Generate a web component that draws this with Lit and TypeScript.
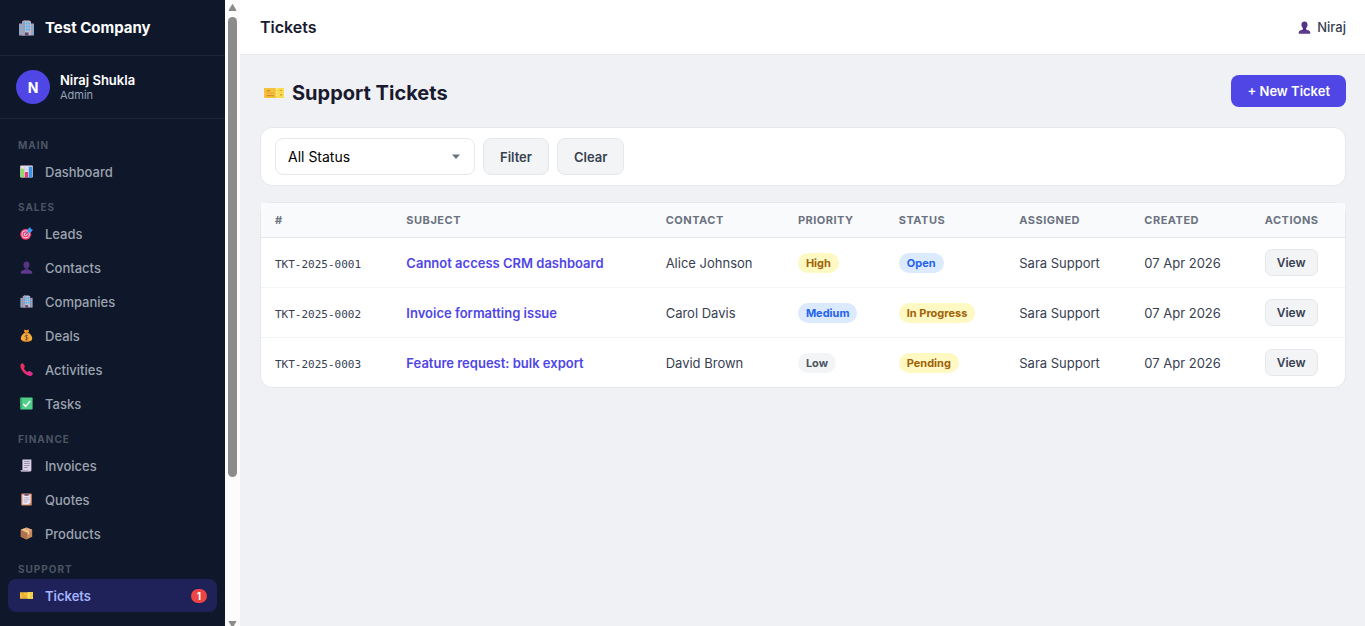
import { LitElement, html, css, svg, type TemplateResult } from "lit";
import { customElement, property } from "lit/decorators.js";
import { classMap } from "lit/directives/class-map.js";

const glyphs: Record<string, TemplateResult> = {
  building: svg`
    <path d="M1 7h6v24H1z" fill="#a79fb5"/><path d="M25 7h6v24h-6z" fill="#a79fb5"/>
    <path d="M7 3l4-2h10l4 2v28H7z" fill="#c3b9cd"/>
    <path d="M7 3l4-2h2v30H7z" fill="#a89db4"/>
    <path d="M10 5h3v4h-3zM15 5h3v4h-3zM20 5h3v4h-3zM10 11h3v4h-3zM15 11h3v4h-3zM20 11h3v4h-3zM10 17h3v4h-3zM15 17h3v4h-3zM20 17h3v4h-3z" fill="#3fb4ee"/>
    <path d="M2 12h3v3H2zM2 18h3v3H2zM2 24h3v3H2zM27 12h3v3h-3zM27 18h3v3h-3zM27 24h3v3h-3z" fill="#57b9e8"/>
    <path d="M13 25h7v6h-7z" fill="#574b70"/>`,
  chart: svg`
    <rect x="0.500" y="1" width="31" height="30" rx="2" fill="#e6dcee"/>
    <path d="M1 11h30M1 21h30M11 1v30M21 1v30" stroke="#c6b9d4" stroke-width="1"/>
    <rect x="2" y="9" width="8" height="22" rx="1" fill="#8ae05e"/>
    <rect x="12" y="17" width="8" height="14" rx="1" fill="#e63a7c"/>
    <rect x="22" y="4" width="8" height="27" rx="1" fill="#3398e8"/>`,
  target: svg`
    <circle cx="14" cy="18" r="13.500" fill="#e9386b"/><circle cx="14" cy="18" r="10" fill="#f5c9db"/>
    <circle cx="14" cy="18" r="7.500" fill="#e5366b"/><circle cx="14" cy="18" r="4.500" fill="#f3d5e2"/><circle cx="14" cy="18" r="2.200" fill="#d92c5e"/>
    <path d="M14 18L25 7" stroke="#2e6fc0" stroke-width="2"/>
    <path d="M18 6l7-6 2 5 5 2-6 7-7-1z" fill="#3a9bf0"/>`,
  person: svg`
    <path d="M16 1c5 0 8 4 7.500 9-.4 5-3 9-7.500 9s-7.100-4-7.500-9C8 5 11 1 16 1z" fill="#563383"/>
    <path d="M12 16h8v5c1 2 10 2 10 8v2H2v-2c0-6 9-6 10-8z" fill="#4c2d78"/>
    <path d="M2 29c0-6 9-6 10-8 3 4 6 4 8 0 1 2 10 2 10 8v2H2z" fill="#5f3a8d"/>`,
  bag: svg`
    <path d="M11 1l5 2 5-2 1 5-3 4h-6l-3-4z" fill="#f59b25"/>
    <path d="M12 9h8c6 3 10 9 10 14 0 6-4 8-14 8S2 29 2 23c0-5 4-11 10-14z" fill="#f6ad3a"/>
    <path d="M4 26c3 3 20 3 25 0-1 4-5 5-13 5S5 30 4 26z" fill="#e58a2c"/>
    <path d="M11 10h10" stroke="#b9632b" stroke-width="2"/>
    <path d="M20 17c-2-2-8-2-8 1s8 2 8 5-6 4-8 1M16 14v14" fill="none" stroke="#7a4a35" stroke-width="2"/>`,
  phone: svg`
    <path d="M2 3c2-2 5-3 6-1l4 6c1 2-2 3-2 5 1 4 5 8 9 9 2 0 3-3 5-2l6 4c2 2 1 4-1 6-3 3-9 1-14-2C9 24 4 18 2 12 1 9 0 5 2 3z" fill="#ea2f63"/>
    <path d="M19 22c2 0 3-3 5-2l6 4c2 2 1 4-1 6-3 2-7 1-11-1z" fill="#e02c96"/>`,
  check: svg`
    <rect x="1" y="1" width="30" height="30" rx="2" fill="#4fd08a"/><path d="M1 3v26l2 2h2V1H3z" fill="#36b372"/>
    <path d="M8 17l6 6L25 10" fill="none" stroke="#fff" stroke-width="3.500"/>`,
  receipt: svg`
    <path d="M6 1h22v26c0 3-2 4-4 4H5c-3 0-4-2-3-4h4z" fill="#dcd3e6"/>
    <path d="M2 27h18c0 3 1 4 3 4H5c-3 0-4-2-3-4z" fill="#b4a7c6"/>
    <path d="M10 6h14M10 11h14M10 16h14M10 21h9" stroke="#8a7ca0" stroke-width="2"/>`,
  clipboard: svg`
    <rect x="3" y="1" width="26" height="30" rx="2" fill="#d98a5b"/><path d="M6 4h20v20l-4 4H6z" fill="#eee6f5"/>
    <path d="M22 28v-4h4z" fill="#b9a9cc"/><path d="M11 1h10v6H11z" fill="#6b5c80"/>
    <path d="M9 12h14M9 17h14M9 22h9" stroke="#a99ab9" stroke-width="2"/>`,
  box: svg`
    <path d="M16 1l14 6v17l-14 7-14-7V7z" fill="#c98a5e"/><path d="M2 7l14 7v17L2 24z" fill="#b0714f"/>
    <path d="M16 1l14 6-14 7L2 7z" fill="#e2aa78"/><path d="M9 4l14 7v6l-4 2v-6L5 6z" fill="#f0cf9e"/>
    <path d="M16 14v17" stroke="#8d563e" stroke-width="1"/>`,
  ticket: svg`
    <path d="M0 8h32v5l-1 1v4l1 1v5H0z" fill="#f4c23f"/>
    <path d="M20 8h12v5l-1 1v4l1 1v5H20z" fill="#fbdc4d"/>
    <path d="M20 8v16" stroke="#fff3b8" stroke-width="2" stroke-dasharray="3 2"/>
    <path d="M4 12h6M4 20h12M26 19h3" stroke="#d98b2c" stroke-width="2"/><path d="M4 16h12" stroke="#eaa832" stroke-width="2"/>
    <path d="M25 12h4" stroke="#e0a52f" stroke-width="2"/>`,
};

const icon = (name: string) => html`<svg viewBox="0 0 32 32" aria-hidden="true">${glyphs[name]}</svg>`;

interface NavItem { label: string; icon: string; count?: number; active?: boolean; }

const sections: { title: string; items: NavItem[] }[] = [
  { title: "Main", items: [{ label: "Dashboard", icon: "chart" }] },
  {
    title: "Sales",
    items: [
      { label: "Leads", icon: "target" },
      { label: "Contacts", icon: "person" },
      { label: "Companies", icon: "building" },
      { label: "Deals", icon: "bag" },
      { label: "Activities", icon: "phone" },
      { label: "Tasks", icon: "check" },
    ],
  },
  {
    title: "Finance",
    items: [
      { label: "Invoices", icon: "receipt" },
      { label: "Quotes", icon: "clipboard" },
      { label: "Products", icon: "box" },
    ],
  },
  { title: "Support", items: [{ label: "Tickets", icon: "ticket", count: 1, active: true }] },
];

@customElement("side-nav")
class SideNav extends LitElement {
  static styles = css`
    :host { display: flex; width: 240px; flex: none; height: 100%; overflow: hidden; background: #0f172a; }
    svg { display: block; width: 100%; height: 100%; }
    .panel { flex: 1; min-width: 0; overflow: hidden; }
    .brand { display: flex; align-items: center; gap: 10px; height: 55px; padding: 0 18px; border-bottom: 1px solid #1f2738; color: #fff; font-size: 15px; font-weight: 700; }
    .brand-icon { width: 17px; height: 16px; }
    .user { display: flex; align-items: center; gap: 10px; padding: 14px 16px; border-bottom: 1px solid #1f2738; }
    .avatar { display: grid; place-items: center; width: 34px; height: 34px; border-radius: 50%; background: #4f46e5; color: #fff; font-size: 14px; font-weight: 700; }
    .name { color: #fff; font-size: 13px; line-height: 16px; font-weight: 600; }
    .role { color: #94a3b8; font-size: 11px; line-height: 14px; }
    .menu { padding-top: 8px; }
    .heading { margin: 0; padding: 12px 18px 4px; color: #4b5563; font-size: 10px; line-height: 12px; font-weight: 700; letter-spacing: 1px; text-transform: uppercase; }
    .list { margin: 0; padding: 0 8px; list-style: none; }
    .link { display: flex; align-items: center; gap: 10px; height: 33px; margin-bottom: 1px; padding: 0 10px; box-sizing: border-box; border-radius: 8px; color: #9ca3af; font-size: 13px; font-weight: 500; text-decoration: none; }
    .link.active { background: #1f2259; color: #a5b4fc; font-weight: 600; }
    .link-icon { width: 13px; height: 13px; padding: 0 2px; }
    .count { margin-left: auto; padding: 0 5px; border-radius: 10px; background: #ef4444; color: #fff; font-size: 10px; line-height: 14px; font-weight: 700; min-width: 6px; text-align: center; }
    .scrollbar { display: flex; flex-direction: column; align-items: center; justify-content: space-between; width: 15px; height: 100%; background: #fcfcfc; }
    .arrow { flex: none; width: 9px; height: 17px; }
    .thumb { width: 9px; height: 460px; margin-bottom: auto; border-radius: 5px; background: #8b8b8b; }
    .arrow.down { height: 7px; }
  `;

  render() {
    return html`
      <div class="panel">
        <div class="brand"><span class="brand-icon">${icon("building")}</span>Test Company</div>
        <div class="user">
          <div class="avatar">N</div>
          <div><div class="name">Niraj Shukla</div><div class="role">Admin</div></div>
        </div>
        <nav class="menu">
          ${sections.map((s) => html`
            <h2 class="heading">${s.title}</h2>
            <ul class="list">
              ${s.items.map((i) => html`
                <li><a class=${classMap({ link: true, active: !!i.active })} href="#">
                  <span class="link-icon">${icon(i.icon)}</span>${i.label}
                  ${i.count ? html`<span class="count">${i.count}</span>` : null}
                </a></li>`)}
            </ul>`)}
        </nav>
      </div>
      <div class="scrollbar" aria-hidden="true">
        <div class="arrow"><svg viewBox="0 0 9 17"><path d="M4.500 4.500L8 10.500H1z" fill="#8b8b8b" stroke="#8b8b8b" stroke-linejoin="round"/></svg></div>
        <div class="thumb"></div>
        <div class="arrow down"><svg viewBox="0 0 9 7"><path d="M1 2.500h7L4.500 8z" fill="#8b8b8b" stroke="#8b8b8b" stroke-linejoin="round"/></svg></div>
      </div>`;
  }
}

interface Ticket { id: string; subject: string; contact: string; priority: string; status: string; assigned: string; created: string; }

const tones: Record<string, string> = { High: "yellow", Medium: "blue", Low: "gray", Open: "blue", "In Progress": "yellow", Pending: "yellow" };

@customElement("ticket-table")
class TicketTable extends LitElement {
  @property({ attribute: false }) tickets: Ticket[] = [];

  static styles = css`
    :host { display: block; border: 1px solid #e5e7eb; border-radius: 12px; background: #fff; }
    .table { width: 100%; border-collapse: separate; border-spacing: 0; font-size: 13px; color: #374151; }
    th { height: 34px; padding: 0 14px; border-bottom: 1px solid #e5e7eb; background: #f9fafb; color: #6b7280; font-size: 11px; font-weight: 700; letter-spacing: 0.5px; text-align: left; text-transform: uppercase; white-space: nowrap; }
    td { height: 49px; padding: 0 14px; border-bottom: 1px solid #f3f4f6; }
    tr:last-child td { border-bottom: 0; }
    .id { font-family: "DejaVu Sans Mono", "Liberation Mono", monospace; font-size: 11px; }
    .subject { color: #4f46e5; font-weight: 600; text-decoration: none; }
    .badge { display: inline-block; padding: 0 8px; border-radius: 10px; font-size: 11px; line-height: 20px; font-weight: 700; white-space: nowrap; }
    .yellow { background: #fef9c3; color: #a16207; }
    .blue { background: #dbeafe; color: #2563eb; }
    .gray { background: #f3f4f6; color: #4b5563; }
    .view { display: block; height: 27px; padding: 0 11px; border: 1px solid #e5e7eb; border-radius: 7px; background: #f3f4f6; color: #374151; font: inherit; font-size: 12px; font-weight: 600; }
  `;

  render() {
    const cols = ["#", "Subject", "Contact", "Priority", "Status", "Assigned", "Created", "Actions"];
    return html`
      <table class="table">
        <thead><tr>${cols.map((c) => html`<th scope="col">${c}</th>`)}</tr></thead>
        <tbody>
          ${this.tickets.map((t) => html`
            <tr>
              <td><span class="id">${t.id}</span></td>
              <td><a class="subject" href="#">${t.subject}</a></td>
              <td>${t.contact}</td>
              <td><span class="badge ${tones[t.priority]}">${t.priority}</span></td>
              <td><span class="badge ${tones[t.status]}">${t.status}</span></td>
              <td>${t.assigned}</td>
              <td>${t.created}</td>
              <td><button class="view" type="button">View</button></td>
            </tr>`)}
        </tbody>
      </table>`;
  }
}

@customElement("app-root")
class AppRoot extends LitElement {
  static styles = css`
    :host { display: flex; height: 100vh; overflow: hidden; background: #f0f1f5; color: #1a1a2e; font-family: Inter, "Liberation Sans", sans-serif; }
    svg { display: block; width: 100%; height: 100%; }
    .main { flex: 1; min-width: 0; overflow: auto; }
    .topbar { display: flex; align-items: center; justify-content: space-between; height: 54px; padding: 0 19px 0 20px; border-bottom: 1px solid #e5e7eb; background: #fff; }
    .crumb { font-size: 16px; font-weight: 600; }
    .account { display: flex; align-items: center; gap: 6px; color: #374151; font-size: 13px; font-weight: 500; }
    .account-icon { width: 13px; height: 13px; }
    .content { padding: 20px 19px 20px 20px; }
    .title-row { display: flex; align-items: flex-start; justify-content: space-between; margin-bottom: 16px; }
    .title { display: flex; align-items: center; gap: 8px; margin: 0; padding-left: 4px; font-size: 20px; line-height: 36px; font-weight: 700; }
    .title-icon { width: 20px; height: 20px; }
    .button { height: 37px; padding: 0 16px; border: 1px solid #e5e7eb; border-radius: 8px; background: #f3f4f6; color: #374151; font: inherit; font-size: 13px; font-weight: 600; }
    .button.primary { height: 32px; border: 0; background: #4f46e5; color: #fff; }
    .filters { display: flex; gap: 8px; margin-bottom: 16px; padding: 10px 14px; border: 1px solid #e5e7eb; border-radius: 12px; background: #fff; }
    .picker { display: grid; width: 200px; align-items: center; }
    .select { grid-area: 1 / 1; width: 100%; height: 37px; padding: 0 12px; border: 1px solid #e5e7eb; border-radius: 8px; appearance: none; background: #fff; color: #000; font: inherit; font-size: 14px; }
    .caret { grid-area: 1 / 1; justify-self: end; width: 10px; height: 5px; margin-right: 14px; pointer-events: none; }
  `;

  private tickets: Ticket[] = [
    { id: "TKT-2025-0001", subject: "Cannot access CRM dashboard", contact: "Alice Johnson", priority: "High", status: "Open", assigned: "Sara Support", created: "07 Apr 2026" },
    { id: "TKT-2025-0002", subject: "Invoice formatting issue", contact: "Carol Davis", priority: "Medium", status: "In Progress", assigned: "Sara Support", created: "07 Apr 2026" },
    { id: "TKT-2025-0003", subject: "Feature request: bulk export", contact: "David Brown", priority: "Low", status: "Pending", assigned: "Sara Support", created: "07 Apr 2026" },
  ];

  render() {
    return html`
      <side-nav></side-nav>
      <main class="main">
        <header class="topbar">
          <div class="crumb">Tickets</div>
          <div class="account"><span class="account-icon">${icon("person")}</span>Niraj</div>
        </header>
        <div class="content">
          <div class="title-row">
            <h1 class="title"><span class="title-icon">${icon("ticket")}</span>Support Tickets</h1>
            <button class="button primary" type="button">+ New Ticket</button>
          </div>
          <form class="filters" @submit=${(e: Event) => e.preventDefault()}>
            <div class="picker">
              <select class="select" aria-label="Status">
                <option>All Status</option><option>Open</option><option>In Progress</option><option>Pending</option>
              </select>
              <span class="caret"><svg viewBox="0 0 10 5"><path d="M1 0.500h8L5 5z" fill="#6b7280"/></svg></span>
            </div>
            <button class="button" type="submit">Filter</button>
            <button class="button" type="reset">Clear</button>
          </form>
          <ticket-table .tickets=${this.tickets}></ticket-table>
        </div>
      </main>`;
  }
}
